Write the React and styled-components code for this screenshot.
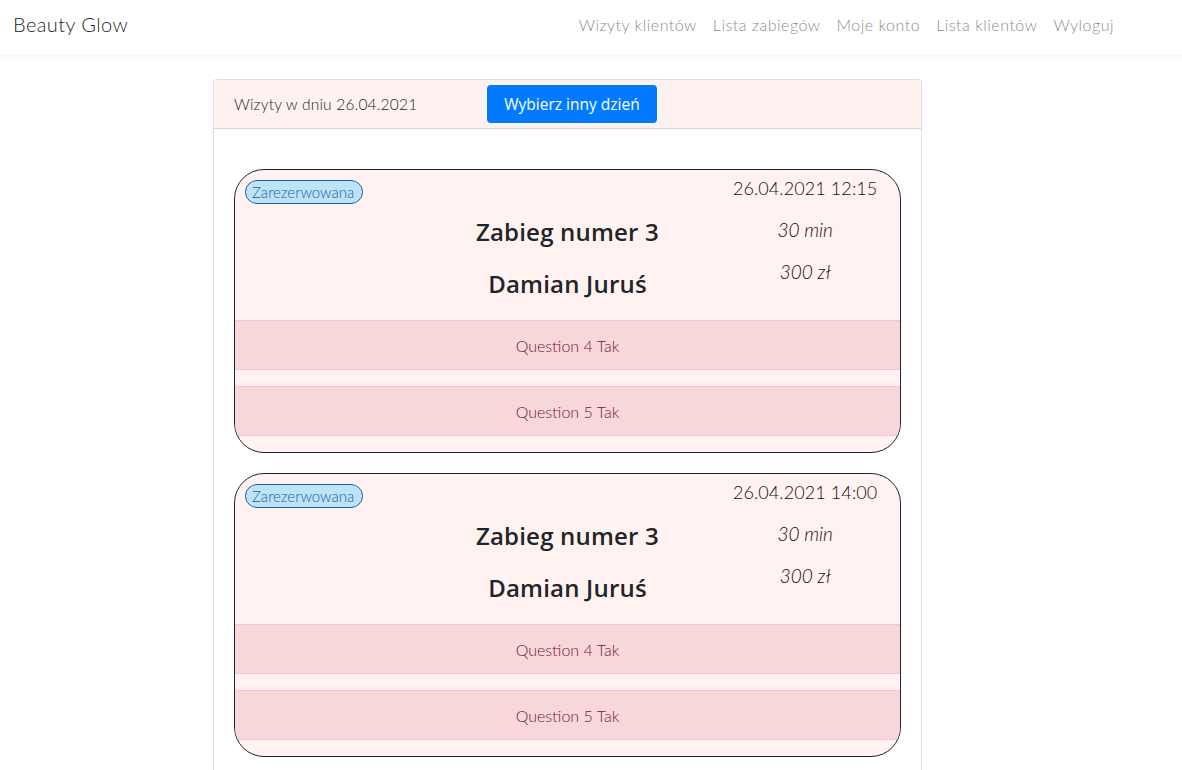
import React from "react";
import styled, { createGlobalStyle } from "styled-components";

const GlobalStyle = createGlobalStyle`
  * {
    box-sizing: border-box;
  }

  body {
    margin: 0;
    background: #fff;
    font-family: Lato, "Open Sans", sans-serif;
    font-size: 16px;
    color: #212529;
  }
`;

const Navbar = styled.nav`
  display: flex;
  align-items: center;
  height: 55px;
  padding: 0 13px 7px;
  background: #fff;
  box-shadow: 0 2px 6px rgba(0, 0, 0, 0.05);
`;

const Brand = styled.div`
  font-size: 20px;
  font-weight: 300;
  color: rgba(0, 0, 0, 0.9);
  letter-spacing: 0.4px;
`;

const NavList = styled.ul`
  display: flex;
  margin: 0 47px 0 auto;
  padding: 0;
  list-style: none;
`;

const NavLink = styled.li`
  padding: 0 8px;
  font-size: 16px;
  font-weight: 300;
  color: rgba(0, 0, 0, 0.5);
  letter-spacing: 0.5px;
`;

const Main = styled.main`
  padding: 24px 0 0 213px;
`;

const Card = styled.section`
  width: 709px;
  border: 1px solid rgba(0, 0, 0, 0.125);
  border-radius: 4px;
  background: #fff;
`;

const CardHeader = styled.header`
  display: flex;
  align-items: center;
  height: 49px;
  padding: 0 20px 1px;
  background: #fdf2f0;
  border-bottom: 1px solid rgba(0, 0, 0, 0.125);
`;

const HeaderLabel = styled.span`
  width: 253px;
  font-size: 15.5px;
  font-weight: 300;
  letter-spacing: 0.2px;
  color: #212529;
`;

const Button = styled.button`
  width: 170px;
  height: 38px;
  padding: 0;
  border: none;
  border-radius: 4px;
  background: #007bff;
  color: #fff;
  font-family: "Open Sans", sans-serif;
  font-size: 15.5px;
  font-weight: 400;
`;

const CardBody = styled.div`
  display: flex;
  flex-direction: column;
  gap: 20px;
  padding: 40px 20px 30px;
`;

const Visit = styled.article`
  border: 1px solid #212529;
  border-radius: 30px;
  background: #fff2f0;
  overflow: hidden;
  padding-bottom: 16px;
`;

const VisitTop = styled.div`
  display: grid;
  grid-template-columns: 1fr 1fr 1fr;
  height: 150px;
`;

const StatusCol = styled.div`
  padding: 10px 0 0 10px;
`;

const Badge = styled.span`
  display: inline-block;
  height: 24px;
  line-height: 22px;
  padding: 0 8px 0 6px;
  border: 1px solid #1d5fa8;
  border-radius: 12px;
  background: #bde3f7;
  color: #2b5c99;
  font-size: 15px;
  font-weight: 300;
`;

const CenterCol = styled.div`
  display: flex;
  flex-direction: column;
  align-items: center;
  padding-top: 47px;
  gap: 22px;
`;

const Heading = styled.div`
  font-family: "Open Sans", Lato, sans-serif;
  font-size: 24px;
  font-weight: 600;
  line-height: 30px;
  letter-spacing: 0.2px;
  color: #212529;
  white-space: nowrap;
`;

const InfoCol = styled.div`
  display: flex;
  flex-direction: column;
  align-items: center;
  padding: 6px 0 0 ${(p) => p.$shift}px;
  gap: 18px;
`;

const DateText = styled.div`
  font-size: 18px;
  font-weight: 300;
  line-height: 24px;
  letter-spacing: 0.1px;
  color: #111;
`;

const Meta = styled.div`
  font-size: 19px;
  font-style: italic;
  font-weight: 300;
  line-height: 24px;
  color: #111;
`;

const Answer = styled.div`
  height: 50px;
  margin-bottom: 16px;
  border: 1px solid #f5c6cb;
  border-left: none;
  border-right: none;
  background: #f8d7da;
  color: #721c24;
  font-size: 16px;
  font-weight: 300;
  display: flex;
  align-items: center;
  justify-content: center;
  &:last-child {
    margin-bottom: 0;
  }
`;

const visits = [
  { time: "26.04.2021 12:15", shift: 32 },
  { time: "26.04.2021 14:00", shift: 32 },
];

const links = ["Wizyty klientów", "Lista zabiegów", "Moje konto", "Lista klientów", "Wyloguj"];

export default function App() {
  return (
    <>
      <GlobalStyle />
      <Navbar>
        <Brand>Beauty Glow</Brand>
        <NavList>
          {links.map((l) => (
            <NavLink key={l}>{l}</NavLink>
          ))}
        </NavList>
      </Navbar>
      <Main>
        <Card>
          <CardHeader>
            <HeaderLabel>Wizyty w dniu 26.04.2021</HeaderLabel>
            <Button>Wybierz inny dzień</Button>
          </CardHeader>
          <CardBody>
            {visits.map((v) => (
              <Visit key={v.time}>
                <VisitTop>
                  <StatusCol>
                    <Badge>Zarezerwowana</Badge>
                  </StatusCol>
                  <CenterCol>
                    <Heading>Zabieg numer 3</Heading>
                    <Heading>Damian Juruś</Heading>
                  </CenterCol>
                  <InfoCol $shift={v.shift}>
                    <DateText>{v.time}</DateText>
                    <Meta>30 min</Meta>
                    <Meta>300 zł</Meta>
                  </InfoCol>
                </VisitTop>
                <Answer>Question 4 Tak</Answer>
                <Answer>Question 5 Tak</Answer>
              </Visit>
            ))}
          </CardBody>
        </Card>
      </Main>
    </>
  );
}
